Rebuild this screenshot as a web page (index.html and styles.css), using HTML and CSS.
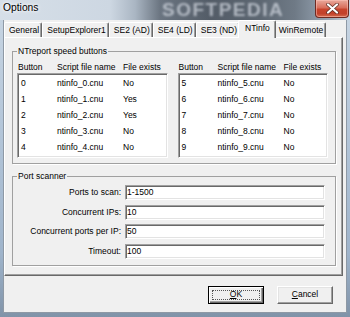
FILE: index.html
```html
<!DOCTYPE html>
<html>
<head>
<meta charset="utf-8">
<title>Options</title>
<link rel="stylesheet" href="styles.css">
</head>
<body>
<div class="window">
  <div class="titlebar">
    <span class="title">Options</span>
    <span class="watermark">SOFTPEDIA</span>
    <div class="close">
      <svg width="13" height="11" viewBox="0 0 13 11">
        <path d="M2 1.5 L11 9.5 M11 1.5 L2 9.5" stroke="#5b2a22" stroke-width="3.6" stroke-linecap="round"/>
        <path d="M2 1.5 L11 9.5 M11 1.5 L2 9.5" stroke="#ffffff" stroke-width="2.2" stroke-linecap="round"/>
      </svg>
    </div>
  </div>
  <div class="client">
    <div class="tabs">
      <div class="tab">General</div>
      <div class="tab">SetupExplorer1</div>
      <div class="tab">SE2 (AD)</div>
      <div class="tab">SE4 (LD)</div>
      <div class="tab">SE3 (ND)</div>
      <div class="tab active">NTinfo</div>
      <div class="tab">WinRemote</div>
    </div>
    <div class="page">
      <fieldset class="group speed">
        <legend>NTreport speed buttons</legend>
        <div class="lists">
          <div class="listcol">
            <div class="hdr"><span>Button</span><span>Script file name</span><span>File exists</span></div>
            <div class="list">
              <div class="row"><span>0</span><span>ntinfo_0.cnu</span><span>No</span></div>
              <div class="row"><span>1</span><span>ntinfo_1.cnu</span><span>Yes</span></div>
              <div class="row"><span>2</span><span>ntinfo_2.cnu</span><span>Yes</span></div>
              <div class="row"><span>3</span><span>ntinfo_3.cnu</span><span>No</span></div>
              <div class="row"><span>4</span><span>ntinfo_4.cnu</span><span>No</span></div>
            </div>
          </div>
          <div class="listcol">
            <div class="hdr"><span>Button</span><span>Script file name</span><span>File exists</span></div>
            <div class="list">
              <div class="row"><span>5</span><span>ntinfo_5.cnu</span><span>No</span></div>
              <div class="row"><span>6</span><span>ntinfo_6.cnu</span><span>No</span></div>
              <div class="row"><span>7</span><span>ntinfo_7.cnu</span><span>No</span></div>
              <div class="row"><span>8</span><span>ntinfo_8.cnu</span><span>No</span></div>
              <div class="row"><span>9</span><span>ntinfo_9.cnu</span><span>No</span></div>
            </div>
          </div>
        </div>
      </fieldset>
      <fieldset class="group scanner">
        <legend>Port scanner</legend>
        <div class="form">
          <span class="lbl">Ports to scan:</span><div class="field">1-1500</div>
          <span class="lbl">Concurrent IPs:</span><div class="field">10</div>
          <span class="lbl">Concurrent ports per IP:</span><div class="field">50</div>
          <span class="lbl">Timeout:</span><div class="field">100</div>
        </div>
      </fieldset>
    </div>
    <div class="buttons">
      <div class="btn default"><span class="focus"><u>O</u>K</span></div>
      <div class="btn"><span class="cap"><u>C</u>ancel</span></div>
    </div>
  </div>
</div>
</body>
</html>
```
FILE: styles.css
```css
* { box-sizing: border-box; }
html, body { margin: 0; padding: 0; }
body {
  width: 350px;
  height: 317px;
  overflow: hidden;
  font-family: "Liberation Sans", Arial, sans-serif;
  font-size: 8.5px;
  color: #000;
  background: #b9c9da;
}
.window {
  width: 350px;
  height: 317px;
  display: flex;
  flex-direction: column;
  padding: 0 3px 4px 3px;
  background: linear-gradient(180deg, #c9d6e3 0, #b4c6d9 40%, #9fb4cb 80%, #8093a8 100%);
}
.titlebar {
  position: relative;
  height: 20px;
  margin: 0 -3px;
  padding: 0 1px 0 3px;
  display: flex;
  align-items: flex-start;
  overflow: hidden;
  background: linear-gradient(90deg, #d6dfe8 0, #cdd7e2 110px, #aab6c3 135px, #6b7581 160px, #535c67 210px, #5d6772 260px, #6f7a86 295px, #9aa8b7 330px, #c4d2e0 350px);
}
.title {
  position: relative;
  z-index: 1;
  font-size: 10.3px;
  line-height: 14px;
  padding-top: 1px;
  color: #000;
  text-shadow: 0 0 5px #fff, 0 0 3px #fff;
}
.watermark {
  position: absolute;
  left: 162px;
  top: 1px;
  font-size: 19px;
  line-height: 18px;
  font-weight: bold;
  letter-spacing: 1.5px;
  color: rgba(214, 220, 228, 0.7);
  filter: blur(1px);
}
.close {
  position: relative;
  z-index: 1;
  margin-left: auto;
  width: 34px;
  height: 18px;
  display: flex;
  align-items: center;
  justify-content: center;
  border: 1px solid #6e2a22;
  border-top: none;
  border-radius: 0 0 4px 4px;
  background: linear-gradient(180deg, #e9a99c 0, #d96f5c 45%, #c7432c 55%, #c2412b 80%, #d46a4e 100%);
  box-shadow: inset 0 0 0 1px rgba(255, 200, 190, 0.5);
}
.client {
  flex: 1;
  display: flex;
  flex-direction: column;
  background: #f0f0f0;
  border-left: 1px solid #8e99a5;
  border-right: 1px solid #8e99a5;
  border-bottom: 1px solid #8e99a5;
}
.tabs {
  height: 17px;
  display: flex;
  align-items: flex-end;
}
.tab {
  height: 15px;
  line-height: 14px;
  padding: 0 2px 0 4px;
  white-space: nowrap;
  border-top: 1px solid #fff;
  border-left: 1px solid #fff;
  border-right: 1px solid #696969;
  box-shadow: inset -1px 0 0 #a0a0a0;
  border-radius: 2px 2px 0 0;
  background: #f0f0f0;
}
.tab.active {
  position: relative;
  z-index: 1;
  height: 18px;
  margin: 0 -2px -1px -2px;
  padding: 0 5px 3px 6px;
}
.page {
  margin-right: 3px;
  padding: 8px 6px 9px 7px;
  border-top: 1px solid #fff;
  border-left: 1px solid #fff;
  border-right: 1px solid #696969;
  border-bottom: 1px solid #696969;
  box-shadow: inset -1px -1px 0 #a0a0a0;
}
.group {
  margin: 0;
  min-width: 0;
  border: 1px solid #a0a0a0;
  box-shadow: 1px 1px 0 #fff;
}
.group legend {
  padding: 0 1px;
  margin: 0;
  line-height: 11px;
}
.speed {
  padding: 5px 7px 5px 4px;
}
.scanner {
  margin-top: 7px;
  padding: 3px 10px 6px 4px;
}
.lists {
  display: grid;
  grid-template-columns: 1fr 1fr;
  column-gap: 10px;
}
.hdr {
  display: grid;
  grid-template-columns: 39px 66px 1fr;
  height: 11px;
  line-height: 11px;
  padding-left: 1px;
  white-space: nowrap;
}
.list {
  background: #fff;
  border: 1px solid;
  border-color: #a0a0a0 #fff #fff #a0a0a0;
  box-shadow: inset 1px 1px 0 #696969, inset -1px -1px 0 #e3e3e3;
  padding: 1px 1px 2px 3px;
}
.row {
  display: grid;
  grid-template-columns: 36px 66px 1fr;
  height: 16px;
  line-height: 16px;
  white-space: nowrap;
}
.form {
  display: grid;
  grid-template-columns: 104px 1fr;
  column-gap: 4px;
  row-gap: 4.5px;
}
.lbl {
  text-align: right;
  line-height: 15px;
  white-space: nowrap;
}
.field {
  height: 15px;
  line-height: 11px;
  padding: 1px 1px 0 1px;
  background: #fff;
  border: 1px solid;
  border-color: #a0a0a0 #fff #fff #a0a0a0;
  box-shadow: inset 1px 1px 0 #696969, inset -1px -1px 0 #e3e3e3;
}
.buttons {
  display: flex;
  justify-content: flex-end;
  gap: 13px;
  margin-top: 10px;
  padding-right: 13px;
}
.btn {
  width: 56px;
  height: 18px;
  display: flex;
  align-items: center;
  justify-content: center;
  background: #f0f0f0;
  border: 1px solid;
  border-color: #fff #696969 #696969 #fff;
  box-shadow: inset -1px -1px 0 #a0a0a0, inset 1px 1px 0 #e3e3e3;
  line-height: 11px;
}
.btn.default {
  border: 1px solid #000;
  box-shadow: inset 1px 1px 0 #fff, inset -1px -1px 0 #696969, inset -2px -2px 0 #a0a0a0;
  padding: 3px;
}
.focus {
  flex: 1;
  align-self: stretch;
  display: flex;
  align-items: center;
  justify-content: center;
  border: 1px dotted #555;
}
.btn u { text-decoration: underline; text-underline-offset: 1px; }
```
